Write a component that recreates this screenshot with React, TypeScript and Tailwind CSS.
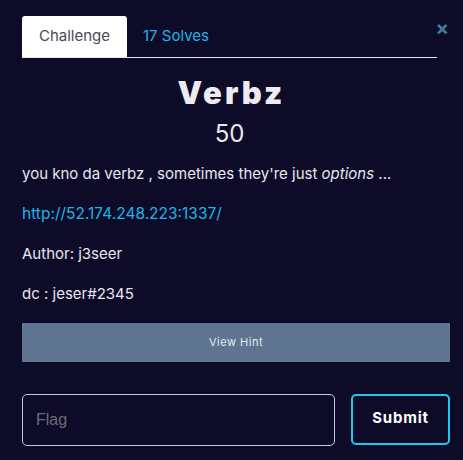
import React from "react";

export default function App() {
  return (
    <div className="w-[463px] h-[460px] bg-[#0e0b29] overflow-hidden" style={{ fontFamily: "Inter, 'Noto Sans', sans-serif" }}>
      <div className="relative pl-[22px] pr-[26px] pt-[16px]">
        <button className="absolute right-[14px] top-[18px] text-[#3b7ea0] text-[20px] font-bold leading-none">×</button>
        <div className="flex items-end border-b border-[#e5e5ee] mr-[-11px] w-[415px]">
          <div className="h-[41px] w-[105px] bg-white rounded-t-[3px] flex items-center justify-center text-[15px] text-[#4a4a55]">Challenge</div>
          <div className="h-[41px] px-[16px] flex items-center text-[15px] text-[#1bb6e3]">17 Solves</div>
        </div>
        <div className="text-center mt-[16px] pl-[4px] text-[31px] font-black tracking-[3px] text-[#ececf0] leading-[38px]">Verbz</div>
        <div className="text-center text-[24px] text-[#e8e8ee] leading-[30px] mt-[7px]">50</div>
        <div className="mt-[14px] text-[15px] text-[#e6e6ee] leading-[22px] flex flex-col gap-[18px]">
          <p>you kno da verbz , sometimes they're just <em>options</em> ...</p>
          <p className="text-[#1bb6e3] text-[15.5px]">http://52.174.248.223:1337/</p>
          <p>Author: j3seer</p>
          <p>dc : jeser#2345</p>
        </div>
        <div className="mt-[18px] h-[39px] w-[428px] bg-[#5e7490] flex items-center justify-center text-[11px] tracking-[0.5px] text-[#e6e9f0]">View Hint</div>
        <div className="mt-[32px] flex gap-[16px] w-[428px]">
          <div className="w-[313px] h-[52px] border border-[#c8c8d0] rounded-[5px] flex items-center px-[13px] text-[16px] text-[#6b6b78]" style={{ fontFamily: "'Liberation Sans', Arial, sans-serif" }}>Flag</div>
          <div className="w-[99px] h-[51px] border-2 border-[#1fc8ee] rounded-[5px] flex items-center justify-center text-[15px] font-bold tracking-[0.8px] text-white pb-[2px]">Submit</div>
        </div>
      </div>
    </div>
  );
}
